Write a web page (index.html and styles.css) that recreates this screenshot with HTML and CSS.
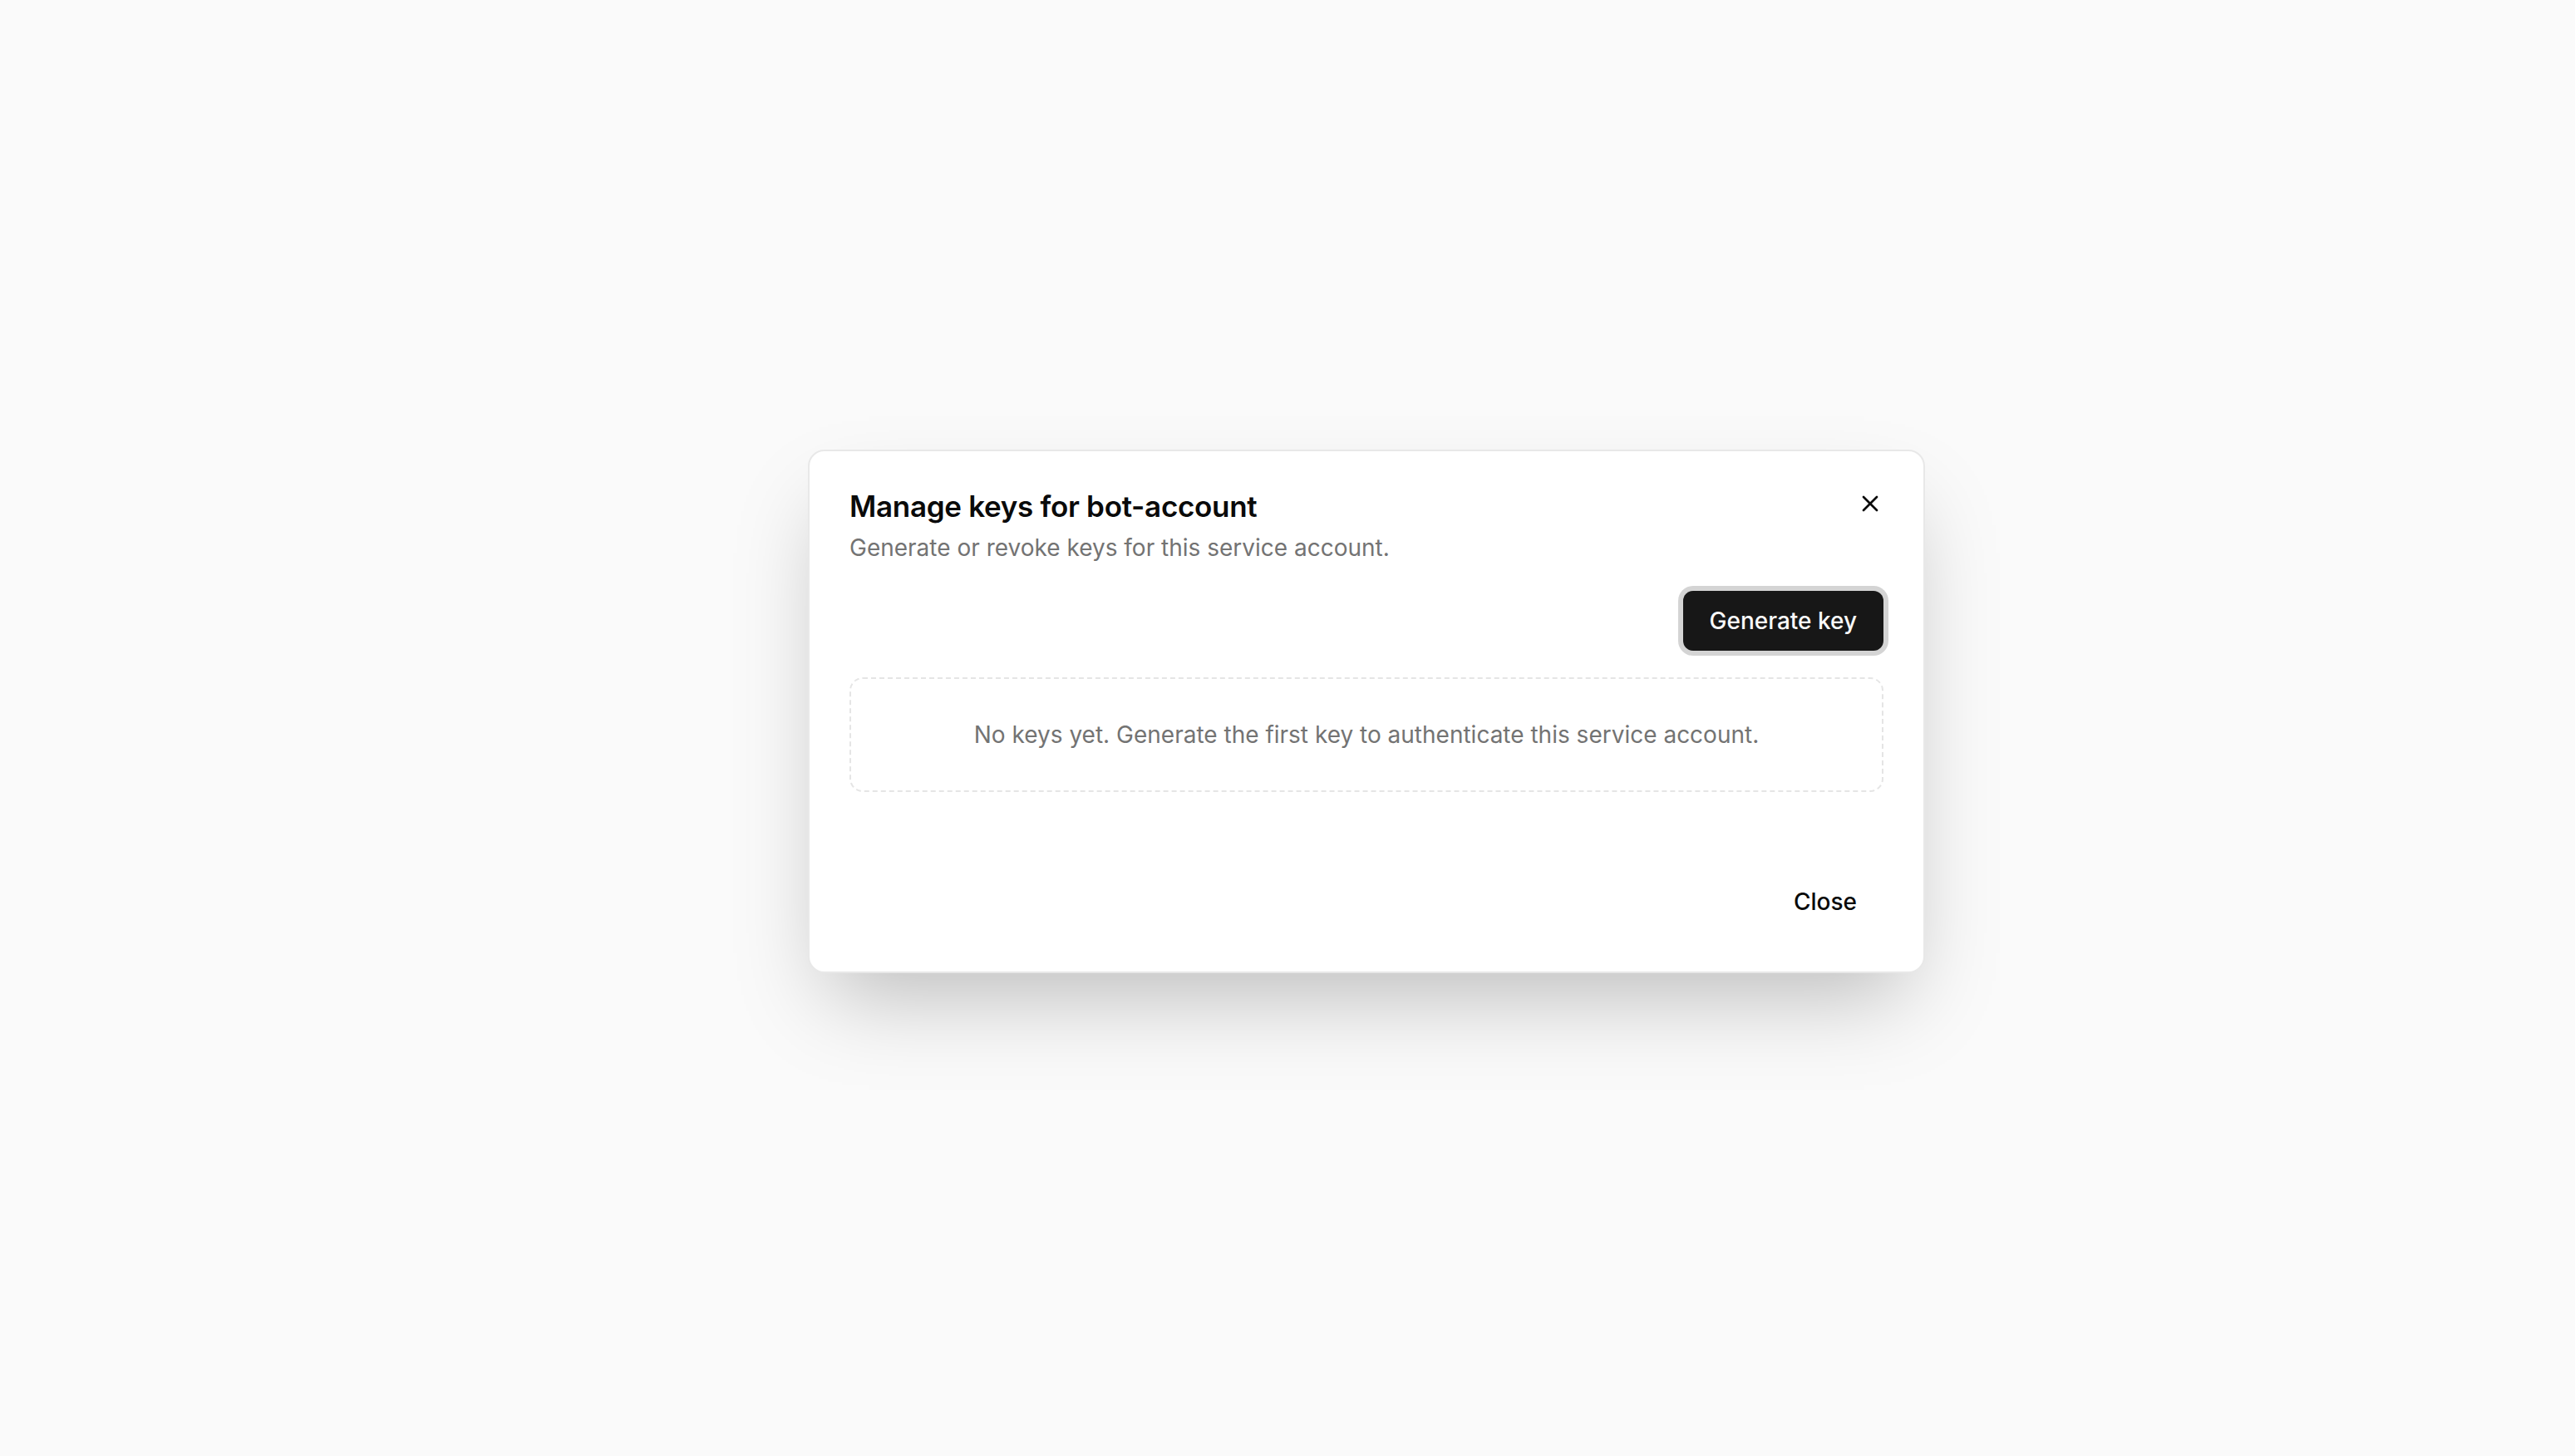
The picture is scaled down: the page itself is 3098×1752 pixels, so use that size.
FILE: index.html
```html
<!DOCTYPE html>
<html lang="en">
<head>
    <meta charset="UTF-8">
    <meta name="viewport" content="width=device-width, initial-scale=1.0">
    <title>Manage keys</title>
    <link rel="stylesheet" href="styles.css">
</head>
<body>
    <div class="overlay">
        <div class="dialog" role="dialog" aria-labelledby="dialog-title">
            <button class="dialog-close" aria-label="Close">
                <svg viewBox="0 0 24 24" width="32" height="32" fill="none" stroke="currentColor" stroke-width="2" stroke-linecap="round" stroke-linejoin="round">
                    <path d="M18 6 6 18"></path>
                    <path d="m6 6 12 12"></path>
                </svg>
            </button>

            <div class="dialog-header">
                <h2 id="dialog-title" class="dialog-title">Manage keys for bot-account</h2>
                <p class="dialog-description">Generate or revoke keys for this service account.</p>
            </div>

            <div class="actions">
                <button class="btn btn-primary">Generate key</button>
            </div>

            <div class="empty-state">
                No keys yet. Generate the first key to authenticate this service account.
            </div>

            <div class="dialog-footer">
                <button class="btn btn-ghost">Close</button>
            </div>
        </div>
    </div>
</body>
</html>
```

FILE: styles.css
```css
* {
    box-sizing: border-box;
}

html, body {
    margin: 0;
    padding: 0;
    height: 100%;
}

body {
    font-family: Inter, "Noto Sans", "Liberation Sans", sans-serif;
    background-color: #fafafa;
    color: #0a0a0a;
}

.overlay {
    display: flex;
    align-items: flex-start;
    padding: 541px 0 0 972px;
    min-height: 100%;
}

.dialog {
    position: relative;
    width: 1344px;
    display: flex;
    flex-direction: column;
    gap: 32px;
    padding: 48px;
    background-color: #fff;
    border: 2px solid #e8e8e8;
    border-radius: 20px;
    box-shadow: 0 50px 100px -24px rgba(0, 0, 0, 0.25);
}

.dialog-close {
    position: absolute;
    top: 47px;
    right: 48px;
    width: 32px;
    height: 32px;
    padding: 0;
    border: none;
    background: none;
    color: #0a0a0a;
    display: flex;
    align-items: center;
    justify-content: center;
    cursor: pointer;
}

.dialog-header {
    display: flex;
    flex-direction: column;
    gap: 12px;
}

.dialog-title {
    margin: 0;
    font-size: 35px;
    line-height: 36px;
    font-weight: 600;
    letter-spacing: -0.3px;
}

.dialog-description {
    margin: 0;
    font-size: 28px;
    line-height: 40px;
    color: #737373;
}

.actions {
    display: flex;
    justify-content: flex-end;
}

.btn {
    font-family: inherit;
    font-size: 28px;
    line-height: 40px;
    font-weight: 500;
    height: 72px;
    padding: 0 32px;
    border: none;
    border-radius: 12px;
    cursor: pointer;
}

.btn-primary {
    background-color: #171717;
    color: #fafafa;
    box-shadow: 0 0 0 6px #d4d4d4;
}

.btn-ghost {
    background: none;
    color: #0a0a0a;
}

.empty-state {
    border: 2px dashed #e5e5e5;
    border-radius: 16px;
    padding: 47px 32px;
    text-align: center;
    font-size: 28px;
    line-height: 40px;
    color: #737373;
}

.dialog-footer {
    display: flex;
    justify-content: flex-end;
    padding-top: 64px;
}
```
